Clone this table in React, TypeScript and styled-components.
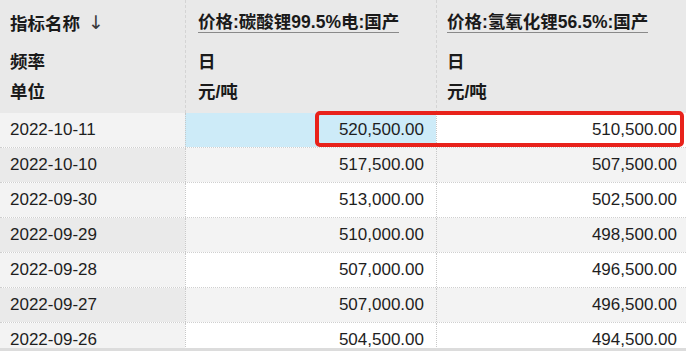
import React from "react";
import styled, { createGlobalStyle } from "styled-components";

const Global = createGlobalStyle`
  html, body { margin: 0; padding: 0; background: #fff; }
  body { font-family: "Liberation Sans", "Noto Sans CJK SC", sans-serif; }
  * { box-sizing: border-box; }
`;

const Page = styled.div`
  position: relative;
  width: 686px;
  height: 351px;
  overflow: hidden;
  display: flex;
  flex-direction: column;
  background: #fff;
`;

const Header = styled.div`
  display: grid;
  grid-template-columns: 185px 251px 250px;
  height: 113px;
  background: #e9e9e9;
  flex: none;
`;

const HeadCol = styled.div<{ $first?: boolean; $pad: number }>`
  display: flex;
  flex-direction: column;
  padding: 6px 0 0 ${(p) => p.$pad}px;
  border-left: ${(p) => (p.$first ? "none" : "1px dashed #d4d4d4")};
  font-family: "Liberation Sans", "Noto Sans CJK SC", sans-serif;
  font-weight: 700;
  font-size: 17.5px;
  color: #1a1a1a;
`;

const TitleLine = styled.div`
  height: 32px;
  display: flex;
  align-items: center;
  margin-bottom: 7px;
`;

const Underlined = styled.span`
  display: inline-block;
  line-height: 20px;
  border-bottom: 1px solid #8a8a8a;
`;

const Arrow = styled.span`
  font-family: "DejaVu Sans", sans-serif;
  font-weight: 400;
  font-size: 19px;
  line-height: 20px;
  color: #3a3a3a;
  margin-left: 8px;
`;

const MetaLine = styled.div`
  height: 30px;
  display: flex;
  align-items: center;
`;

const Body = styled.div`
  flex: 1;
  overflow: hidden;
`;

const Row = styled.div`
  display: grid;
  grid-template-columns: 185px 251px 250px;
  height: 35px;
  border-bottom: 1px dotted #cfcfcf;
`;

const DateCell = styled.div<{ $alt: boolean }>`
  display: flex;
  align-items: center;
  padding-left: 10px;
  background: ${(p) => (p.$alt ? "#eaeaea" : "#f3f3f3")};
  font-size: 17px;
  color: #1e1e1e;
`;

const ValueCell = styled.div<{ $bg: string; $padRight: number }>`
  display: flex;
  align-items: center;
  justify-content: flex-end;
  padding-right: ${(p) => p.$padRight}px;
  background: ${(p) => p.$bg};
  border-left: 1px dotted #c8c8c8;
  font-size: 17px;
  color: #1e1e1e;
`;

const BottomBar = styled.div`
  height: 3px;
  flex: none;
  background: #dcdcdc;
`;

const Highlight = styled.div`
  position: absolute;
  left: 315px;
  top: 111px;
  width: 369px;
  height: 36px;
  border: 4px solid #e8221b;
  border-radius: 5px;
  pointer-events: none;
`;

const rows = [
  ["2022-10-11", "520,500.00", "510,500.00"],
  ["2022-10-10", "517,500.00", "507,500.00"],
  ["2022-09-30", "513,000.00", "502,500.00"],
  ["2022-09-29", "510,000.00", "498,500.00"],
  ["2022-09-28", "507,000.00", "496,500.00"],
  ["2022-09-27", "507,000.00", "496,500.00"],
  ["2022-09-26", "504,500.00", "494,500.00"],
];

export default function App() {
  return (
    <>
      <Global />
      <Page>
        <Header>
          <HeadCol $first $pad={10}>
            <TitleLine>
              指标名称<Arrow>↓</Arrow>
            </TitleLine>
            <MetaLine>频率</MetaLine>
            <MetaLine>单位</MetaLine>
          </HeadCol>
          <HeadCol $pad={12}>
            <TitleLine>
              <Underlined>价格:碳酸锂99.5%电:国产</Underlined>
            </TitleLine>
            <MetaLine>日</MetaLine>
            <MetaLine>元/吨</MetaLine>
          </HeadCol>
          <HeadCol $pad={10}>
            <TitleLine>
              <Underlined>价格:氢氧化锂56.5%:国产</Underlined>
            </TitleLine>
            <MetaLine>日</MetaLine>
            <MetaLine>元/吨</MetaLine>
          </HeadCol>
        </Header>
        <Body>
          {rows.map((r, i) => {
            const alt = i % 2 === 1;
            const bg = alt ? "#f3f3f3" : "#ffffff";
            return (
              <Row key={r[0]}>
                <DateCell $alt={alt}>{r[0]}</DateCell>
                <ValueCell $bg={i === 0 ? "#cdebf8" : bg} $padRight={12}>
                  {r[1]}
                </ValueCell>
                <ValueCell $bg={bg} $padRight={9}>
                  {r[2]}
                </ValueCell>
              </Row>
            );
          })}
        </Body>
        <BottomBar />
        <Highlight />
      </Page>
    </>
  );
}
